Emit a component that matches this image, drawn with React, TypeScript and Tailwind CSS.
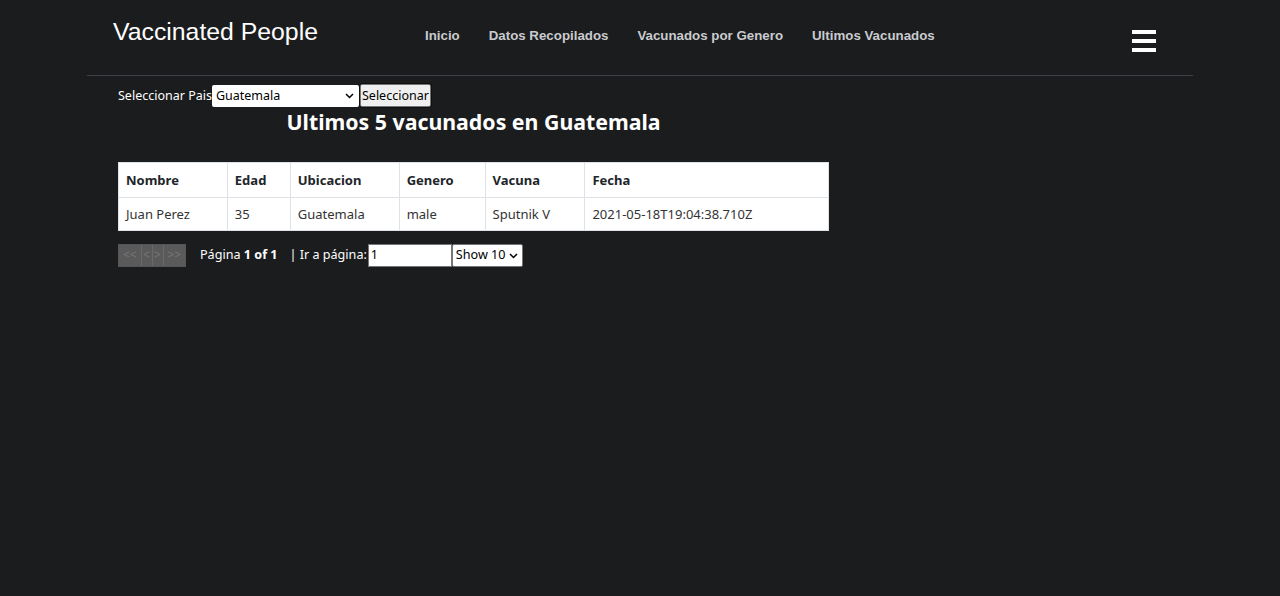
import React from "react";

export default function App() {
  const cols = [
    { h: "Nombre", v: "Juan Perez", w: "w-[109px]" },
    { h: "Edad", v: "35", w: "w-[63px]" },
    { h: "Ubicacion", v: "Guatemala", w: "w-[109px]" },
    { h: "Genero", v: "male", w: "w-[86px]" },
    { h: "Vacuna", v: "Sputnik V", w: "w-[100px]" },
    { h: "Fecha", v: "2021-05-18T19:04:38.710Z", w: "w-[244px]" },
  ];
  return (
    <div className="min-h-[596px] w-full bg-[#1b1c1e] font-['Noto_Sans',sans-serif] text-white">
      <div className="mx-auto w-[1106px]">
        <header className="flex h-[76px] items-start border-b border-[#3d4046]">
          <div className="pl-[26px] pt-[16px] font-['Liberation_Sans',Arial,sans-serif] text-[24.8px] leading-[32px] text-white w-[338px]">
            Vaccinated People
          </div>
          <nav className="flex gap-[29px] pt-[27px] font-['Liberation_Sans',Arial,sans-serif] text-[13.3px] font-bold leading-[18px] text-[#c9cbcf]">
            <span>Inicio</span>
            <span>Datos Recopilados</span>
            <span>Vacunados por Genero</span>
            <span>Ultimos Vacunados</span>
          </nav>
          <div className="ml-auto mr-[37px] mt-[30px] flex w-[24px] flex-col gap-[5px]">
            <div className="h-[4px] w-[24px] bg-white" />
            <div className="h-[4px] w-[24px] bg-white" />
            <div className="h-[4px] w-[24px] bg-white" />
          </div>
        </header>
      </div>
      <div className="pl-[118px] pt-[8px]">
        <div className="flex h-[23px] items-center text-[12.5px] leading-[20px]">
          <span>Seleccionar Pais</span>
          <div className="relative flex h-[22px] w-[147px] items-center rounded-[2px] bg-white pl-[4px] text-[12.5px] text-black">
            Guatemala
            <svg className="absolute right-[5px] top-[8px]" width="9" height="6" viewBox="0 0 9 6">
              <path d="M1 1l3.5 3.5L8 1" stroke="#000" strokeWidth="1.5" fill="none" />
            </svg>
          </div>
          <div className="ml-[1px] flex h-[23px] w-[71px] items-center justify-center rounded-[2px] border border-[#767676] bg-[#efefef] text-[12.5px] text-black outline outline-1 outline-[#101010]">
            Seleccionar
          </div>
        </div>
        <div className="w-[711px]">
          <h2 className="text-center text-[21.3px] font-bold leading-[30px]">
            Ultimos 5 vacunados en Guatemala
          </h2>
          <table className="mt-[25px] w-[711px] border-collapse bg-white text-[13px] text-[#212529]">
            <thead>
              <tr className="h-[35px]">
                {cols.map((c) => (
                  <th key={c.h} className={`${c.w} border border-[#dee2e6] px-[7px] pt-[2px] text-left font-bold`}>
                    {c.h}
                  </th>
                ))}
              </tr>
            </thead>
            <tbody>
              <tr className="h-[33px]">
                {cols.map((c) => (
                  <td key={c.h} className="border border-[#dee2e6] px-[7px] pt-[1px] text-[#333]">
                    {c.v}
                  </td>
                ))}
              </tr>
            </tbody>
          </table>
        </div>
        <div className="mt-[12px] flex h-[24px] items-center text-[12.6px]">
          <div className="flex h-[23px] w-[68px] border border-[#555] bg-[#5a5a5a] text-[12px] text-[#777]">
            <span className="flex flex-1 items-center justify-center border-r border-[#6a6a6a]">&lt;&lt;</span>
            <span className="flex w-[11px] items-center justify-center border-r border-[#6a6a6a]">&lt;</span>
            <span className="flex w-[11px] items-center justify-center border-r border-[#6a6a6a]">&gt;</span>
            <span className="flex flex-1 items-center justify-center">&gt;&gt;</span>
          </div>
          <span className="ml-[14px] text-[#fff]">
            Página <b>1 of 1</b>
          </span>
          <span className="ml-[12px]">| Ir a página:</span>
          <div className="ml-[1px] flex h-[23px] w-[84px] items-center border border-[#767676] bg-white pl-[2px] text-[12.6px] text-black">
            1
          </div>
          <div className="relative flex h-[23px] w-[71px] items-center rounded-[2px] border border-[#767676] bg-white pl-[3px] text-[12.6px] text-black">
            Show 10
            <svg className="absolute right-[4px] top-[8px]" width="9" height="6" viewBox="0 0 9 6">
              <path d="M1 1l3.5 3.5L8 1" stroke="#000" strokeWidth="1.5" fill="none" />
            </svg>
          </div>
        </div>
      </div>
    </div>
  );
}
